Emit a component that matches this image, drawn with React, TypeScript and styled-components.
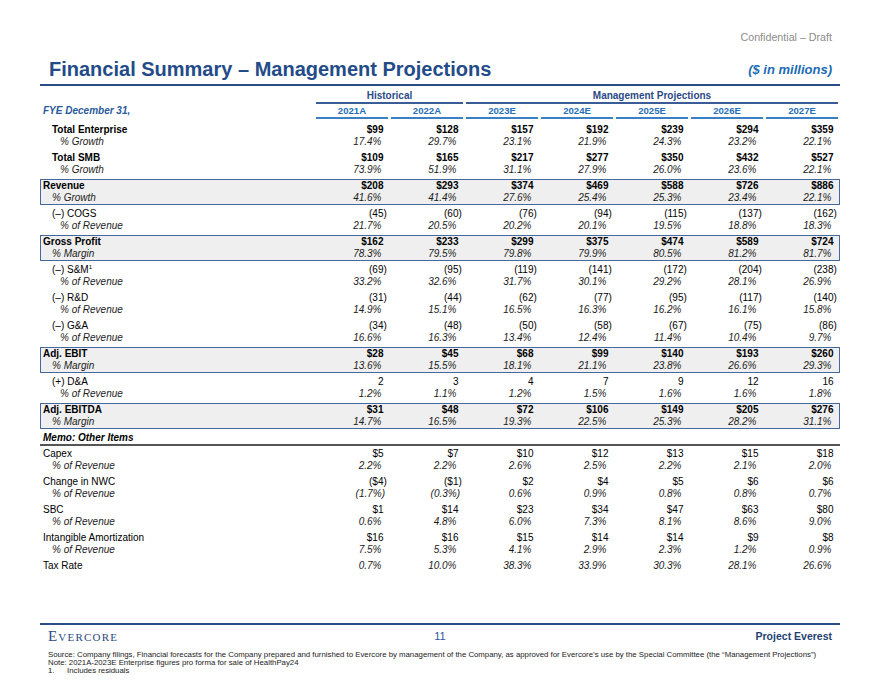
import React from 'react';
import styled, { createGlobalStyle } from 'styled-components';

const YEARS = ['2021A', '2022A', '2023E', '2024E', '2025E', '2026E', '2027E'];

type Line = {
  label: string;
  note?: string;
  values: string[];
  bold?: boolean;
  italic?: boolean;
  italicValues?: boolean;
  indent: number;
};
type Block = { lines: Line[]; boxed?: boolean };

const pair = (
  label: string,
  values: string[],
  sub: string,
  subValues: string[],
  opts: { bold?: boolean; boxed?: boolean; indent?: number; note?: string } = {}
): Block => {
  const base = opts.indent ?? 12;
  return {
    boxed: opts.boxed,
    lines: [
      { label, note: opts.note, values, bold: opts.bold, indent: base },
      { label: sub, values: subValues, italic: true, italicValues: true, indent: base + (base === 3 ? 9 : 8) },
    ],
  };
};

const MAIN: Block[] = [
  pair('Total Enterprise', ['$99', '$128', '$157', '$192', '$239', '$294', '$359'], '% Growth',
    ['17.4%', '29.7%', '23.1%', '21.9%', '24.3%', '23.2%', '22.1%'], { bold: true }),
  pair('Total SMB', ['$109', '$165', '$217', '$277', '$350', '$432', '$527'], '% Growth',
    ['73.9%', '51.9%', '31.1%', '27.9%', '26.0%', '23.6%', '22.1%'], { bold: true }),
  pair('Revenue', ['$208', '$293', '$374', '$469', '$588', '$726', '$886'], '% Growth',
    ['41.6%', '41.4%', '27.6%', '25.4%', '25.3%', '23.4%', '22.1%'], { bold: true, boxed: true, indent: 3 }),
  pair('(–) COGS', ['(45)', '(60)', '(76)', '(94)', '(115)', '(137)', '(162)'], '% of Revenue',
    ['21.7%', '20.5%', '20.2%', '20.1%', '19.5%', '18.8%', '18.3%']),
  pair('Gross Profit', ['$162', '$233', '$299', '$375', '$474', '$589', '$724'], '% Margin',
    ['78.3%', '79.5%', '79.8%', '79.9%', '80.5%', '81.2%', '81.7%'], { bold: true, boxed: true, indent: 3 }),
  pair('(–) S&M', ['(69)', '(95)', '(119)', '(141)', '(172)', '(204)', '(238)'], '% of Revenue',
    ['33.2%', '32.6%', '31.7%', '30.1%', '29.2%', '28.1%', '26.9%'], { note: '1' }),
  pair('(–) R&D', ['(31)', '(44)', '(62)', '(77)', '(95)', '(117)', '(140)'], '% of Revenue',
    ['14.9%', '15.1%', '16.5%', '16.3%', '16.2%', '16.1%', '15.8%']),
  pair('(–) G&A', ['(34)', '(48)', '(50)', '(58)', '(67)', '(75)', '(86)'], '% of Revenue',
    ['16.6%', '16.3%', '13.4%', '12.4%', '11.4%', '10.4%', '9.7%']),
  pair('Adj. EBIT', ['$28', '$45', '$68', '$99', '$140', '$193', '$260'], '% Margin',
    ['13.6%', '15.5%', '18.1%', '21.1%', '23.8%', '26.6%', '29.3%'], { bold: true, boxed: true, indent: 3 }),
  pair('(+) D&A', ['2', '3', '4', '7', '9', '12', '16'], '% of Revenue',
    ['1.2%', '1.1%', '1.2%', '1.5%', '1.6%', '1.6%', '1.8%']),
  pair('Adj. EBITDA', ['$31', '$48', '$72', '$106', '$149', '$205', '$276'], '% Margin',
    ['14.7%', '16.5%', '19.3%', '22.5%', '25.3%', '28.2%', '31.1%'], { bold: true, boxed: true, indent: 3 }),
];

const MEMO: Block[] = [
  pair('Capex', ['$5', '$7', '$10', '$12', '$13', '$15', '$18'], '% of Revenue',
    ['2.2%', '2.2%', '2.6%', '2.5%', '2.2%', '2.1%', '2.0%'], { indent: 3 }),
  pair('Change in NWC', ['($4)', '($1)', '$2', '$4', '$5', '$6', '$6'], '% of Revenue',
    ['(1.7%)', '(0.3%)', '0.6%', '0.9%', '0.8%', '0.8%', '0.7%'], { indent: 3 }),
  pair('SBC', ['$1', '$14', '$23', '$34', '$47', '$63', '$80'], '% of Revenue',
    ['0.6%', '4.8%', '6.0%', '7.3%', '8.1%', '8.6%', '9.0%'], { indent: 3 }),
  pair('Intangible Amortization', ['$16', '$16', '$15', '$14', '$14', '$9', '$8'], '% of Revenue',
    ['7.5%', '5.3%', '4.1%', '2.9%', '2.3%', '1.2%', '0.9%'], { indent: 3 }),
  {
    lines: [{
      label: 'Tax Rate',
      values: ['0.7%', '10.0%', '38.3%', '33.9%', '30.3%', '28.1%', '26.6%'],
      italicValues: true,
      indent: 3,
    }],
  },
];

const App = (): JSX.Element => {
  const renderBlock = (block: Block, i: number) => (
    <Group key={i} $boxed={block.boxed}>
      {block.lines.map((line, j) => (
        <Row key={j}>
          <Label $indent={line.indent} $bold={line.bold} $italic={line.italic}>
            {line.label}
            {line.note && <Sup>{line.note}</Sup>}
          </Label>
          {line.values.map((v, k) => (
            <Value key={k} $bold={line.bold} $italic={line.italicValues} $hang={v.endsWith(')')}>{v}</Value>
          ))}
        </Row>
      ))}
    </Group>
  );

  return (
    <>
      <GlobalStyle />
      <Page>
        <Confidential>Confidential – Draft</Confidential>
        <TitleRow>
          <Title>Financial Summary – Management Projections</Title>
          <Units>($ in millions)</Units>
        </TitleRow>
        <Table>
          <HeadRow>
            <span />
            <GroupHead $span={2}>Historical</GroupHead>
            <GroupHead $span={5}>Management Projections</GroupHead>
          </HeadRow>
          <HeadRow>
            <FyeLabel>FYE December 31,</FyeLabel>
            {YEARS.map(y => <YearHead key={y}>{y}</YearHead>)}
          </HeadRow>
          <Body>
            {MAIN.map(renderBlock)}
            <MemoHead>Memo: Other Items</MemoHead>
            {MEMO.map(renderBlock)}
          </Body>
        </Table>
        <Footer>
          <FooterBar>
            <Logo>Evercore</Logo>
            <PageNum>11</PageNum>
            <Project>Project Everest</Project>
          </FooterBar>
          <Notes>
            <div>Source: Company filings, Financial forecasts for the Company prepared and furnished to Evercore by management of the Company, as approved for Evercore’s use by the Special Committee (the “Management Projections”)</div>
            <div>Note: 2021A-2023E Enterprise figures pro forma for sale of HealthPay24</div>
            <FootNote><span>1.</span>Includes residuals</FootNote>
          </Notes>
        </Footer>
      </Page>
    </>
  );
};

export default App;

const GlobalStyle = createGlobalStyle`
  html, body {
    margin: 0;
    padding: 0;
    background: #fff;
  }
  body {
    font-family: "Liberation Sans", Arial, sans-serif;
    color: #000;
  }
`
const Page = styled.div`
  width: 880px;
  height: 680px;
  box-sizing: border-box;
  padding: 0 40px;
  display: flex;
  flex-direction: column;
  overflow: hidden;
`
const Confidential = styled.div`
  margin-top: 30px;
  height: 14px;
  line-height: 14px;
  padding-right: 8px;
  text-align: right;
  font-size: 10.7px;
  color: #8c8c8c;
`
const TitleRow = styled.div`
  height: 37px;
  display: flex;
  align-items: flex-end;
  justify-content: space-between;
  padding: 0 8px 3px 9px;
  border-bottom: 2px solid #2b4c85;
`
const Title = styled.h1`
  margin: 0;
  font-size: 20px;
  line-height: 24px;
  font-weight: 700;
  color: #234b88;
`
const Units = styled.div`
  font-size: 13px;
  line-height: 22px;
  font-weight: 700;
  font-style: italic;
  color: #1d6cb4;
`
const Table = styled.div`
  display: flex;
  flex-direction: column;
`
const Grid = styled.div`
  display: grid;
  grid-template-columns: 275px repeat(7, 75px);
`
const HeadRow = styled(Grid)``
const GroupHead = styled.div<{ $span: number }>`
  grid-column: span ${p => p.$span};
  margin: 4px 2px 0 1px;
  line-height: 12px;
  text-align: center;
  font-size: 10px;
  font-weight: 700;
  color: #2b4a85;
  border-bottom: 2px solid #3a5d98;
`
const FyeLabel = styled.div`
  padding: 1px 0 0 3px;
  line-height: 12px;
  font-size: 10px;
  font-weight: 700;
  font-style: italic;
  color: #2a5a9c;
`
const YearHead = styled.div`
  margin: 1px 2px 0 1px;
  line-height: 12px;
  text-align: center;
  font-size: 9.6px;
  font-weight: 700;
  color: #2670b8;
  border-bottom: 2px solid #3b80c6;
`
const Body = styled.div`
  margin-top: 3px;
  display: flex;
  flex-direction: column;
`
const Group = styled.div<{ $boxed?: boolean }>`
  padding: ${p => (p.$boxed ? '1px 0' : '2px 0')};
  margin: ${p => (p.$boxed ? '1px 0' : '0')};
  background: ${p => (p.$boxed ? '#efefef' : 'transparent')};
  box-shadow: ${p => (p.$boxed ? 'inset 0 0 0 1px #4668a0' : 'none')};
`
const Row = styled(Grid)`
  height: 12px;
  line-height: 12px;
  font-size: 10px;
`
const Label = styled.div<{ $indent: number; $bold?: boolean; $italic?: boolean }>`
  padding-left: ${p => p.$indent}px;
  font-weight: ${p => (p.$bold ? 700 : 400)};
  font-style: ${p => (p.$italic ? 'italic' : 'normal')};
  color: ${p => (p.$italic ? '#1a1a1a' : '#000')};
  white-space: nowrap;
`
const Value = styled.div<{ $bold?: boolean; $italic?: boolean; $hang?: boolean }>`
  text-align: right;
  white-space: nowrap;
  font-weight: ${p => (p.$bold ? 700 : 400)};
  font-style: ${p => (p.$italic ? 'italic' : 'normal')};
  color: ${p => (p.$italic ? '#1a1a1a' : '#000')};
  padding-right: ${p => (p.$italic ? (p.$hang ? 5 : 8.5) : p.$hang ? 3.2 : 6.5)}px;
`
const Sup = styled.sup`
  font-size: 6px;
  line-height: 0;
  vertical-align: 4px;
`
const MemoHead = styled.div`
  margin-top: 2px;
  padding-left: 3px;
  line-height: 12px;
  font-size: 10px;
  font-weight: 700;
  font-style: italic;
  border-bottom: 2px solid #555;
`
const Footer = styled.div`
  margin-top: auto;
  border-top: 2px solid #2b4c85;
  padding: 0 8px 5px;
`
const FooterBar = styled.div`
  height: 22px;
  display: grid;
  grid-template-columns: 1fr auto 1fr;
  align-items: center;
`
const Logo = styled.div`
  font-family: "Liberation Serif", "Times New Roman", serif;
  font-variant: small-caps;
  font-size: 15px;
  line-height: 16px;
  letter-spacing: 1.2px;
  color: #2c4a7e;
`
const PageNum = styled.div`
  font-size: 11px;
  color: #2f5597;
`
const Project = styled.div`
  justify-self: end;
  font-size: 10.5px;
  font-weight: 700;
  color: #1f3f73;
`
const Notes = styled.div`
  margin-top: 4px;
  font-size: 7.8px;
  line-height: 8px;
  color: #222;
  white-space: nowrap;
`
const FootNote = styled.div`
  display: flex;
  & > span {
    width: 19px;
  }
`
